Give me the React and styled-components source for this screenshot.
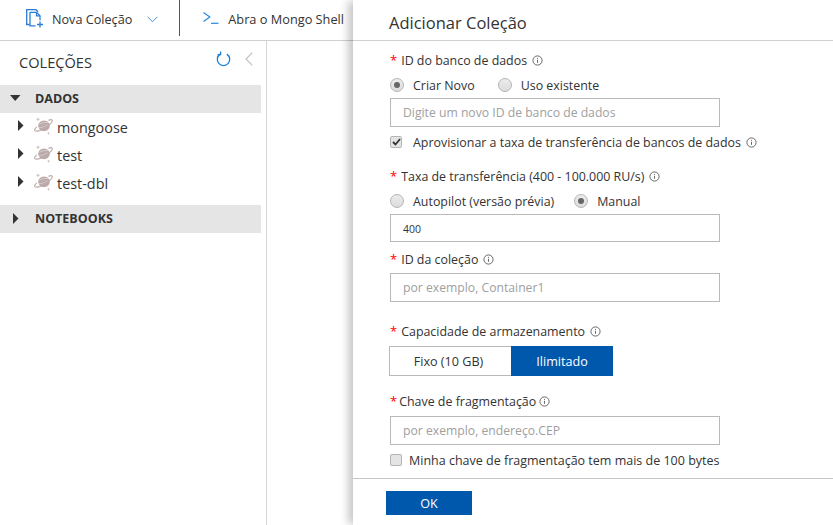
import React from "react";
import styled, { createGlobalStyle } from "styled-components";

const Global = createGlobalStyle`
  html, body { margin: 0; padding: 0; background: #fff; }
  body { font-family: "Open Sans", "Noto Sans", "Liberation Sans", sans-serif; color: #333; }
  * { box-sizing: border-box; }
`;

const Page = styled.div`
  position: relative;
  width: 833px;
  height: 525px;
  overflow: hidden;
  background: #fff;
`;
const Toolbar = styled.div`
  display: flex;
  align-items: flex-start;
  height: 41px;
  border-bottom: 1px solid #cfcfcf;
`;
const ToolButton = styled.div`
  display: flex;
  align-items: center;
  height: 36px;
  padding-left: ${p => p.$pl}px;
  padding-right: ${p => p.$pr}px;
  gap: ${p => p.$gap}px;
  font-size: ${p => p.$fs}px;
  color: #333;
  border-right: ${p => (p.$divider ? "1px solid #555" : "none")};
  svg { flex: none; }
`;
const ToolCaption = styled.span`
  margin-top: 2px;
  white-space: nowrap;
`;
const Chevron = styled.svg`
  margin-left: 7px;
  margin-top: 2px;
`;
const Body = styled.div`
  display: flex;
  height: 484px;
`;
const Sidebar = styled.div`
  width: 267px;
  height: 100%;
  border-right: 1px solid #d6d6d6;
  padding-right: 5px;
`;
const SideHead = styled.div`
  display: flex;
  align-items: center;
  height: 44px;
  padding-left: 19px;
  padding-right: 8px;
`;
const SideTitle = styled.span`
  flex: 1;
  font-size: 14.6px;
  color: #333;
  margin-top: -2px;
`;
const HeadIcons = styled.div`
  display: flex;
  align-items: center;
  gap: 14px;
  margin-top: -8px;
`;
const Section = styled.div`
  display: flex;
  align-items: center;
  height: 28px;
  background: #e5e5e5;
  font-size: 12.5px;
  font-weight: 700;
  color: #333;
  padding-left: ${p => p.$pl}px;
  padding-bottom: 2px;
  gap: ${p => p.$gap}px;
`;
const Tree = styled.div`
  display: flex;
  flex-direction: column;
  padding: 0 0 8px 18px;
`;
const TreeRow = styled.div`
  display: flex;
  align-items: center;
  height: 28px;
  font-size: 14.4px;
  color: #333;
`;
const TreeCaret = styled.svg`
  margin-right: 10px;
  margin-top: -3px;
`;
const PlanetIcon = styled.svg`
  margin-right: 4px;
  margin-top: -2px;
`;
const Panel = styled.div`
  position: absolute;
  left: 353px;
  top: 0;
  width: 480px;
  height: 525px;
  background: #fff;
  box-shadow: -6px 0 8px -1px rgba(0, 0, 0, 0.22);
  display: flex;
  flex-direction: column;
`;
const PanelHead = styled.div`
  height: 41px;
  padding: 12px 0 0 36px;
  font-size: 16.5px;
  line-height: 22px;
  color: #333;
  border-bottom: 1px solid #cfcfcf;
`;
const Form = styled.div`
  flex: 1;
  display: flex;
  flex-direction: column;
  padding: 0 0 0 37px;
`;
const Label = styled.div`
  display: flex;
  align-items: center;
  height: 18px;
  margin-top: ${p => p.$mt}px;
  font-size: 12.42px;
  color: #333;
  white-space: nowrap;
  gap: ${p => p.$gap ?? 5}px;
`;
const Star = styled.span`
  color: #f00;
  font-size: 13px;
  margin-right: -1px;
`;
const RadioRow = styled.div`
  display: flex;
  align-items: center;
  height: 18px;
  margin-top: ${p => p.$mt}px;
  font-size: 12.42px;
  color: #333;
  white-space: nowrap;
`;
const Radio = styled.span`
  position: relative;
  flex: none;
  width: 14px;
  height: 14px;
  border-radius: 50%;
  border: 1px solid #b5b5b5;
  background: linear-gradient(#ececec, #dcdcdc);
  margin-right: 9px;
  margin-left: ${p => p.$ml || 0}px;
  &::after {
    content: "";
    display: ${p => (p.$on ? "block" : "none")};
    position: absolute;
    left: 3px;
    top: 3px;
    width: 6px;
    height: 6px;
    border-radius: 50%;
    background: #666;
  }
`;
const Input = styled.div`
  display: flex;
  align-items: center;
  width: 330px;
  height: ${p => p.$h}px;
  margin-top: ${p => p.$mt}px;
  border: 1px solid #b9b9b9;
  padding-left: 12px;
  padding-top: ${p => (p.$value ? 2 : 0)}px;
  font-size: ${p => (p.$value ? 10.5 : 12.2)}px;
  color: ${p => (p.$value ? "#333" : "#a0a0a0")};
  white-space: nowrap;
`;
const CheckRow = styled.div`
  display: flex;
  align-items: center;
  height: 18px;
  margin-top: ${p => p.$mt}px;
  gap: ${p => p.$gap}px;
  font-size: ${p => p.$fs}px;
  color: #333;
  white-space: nowrap;
`;
const Check = styled.span`
  display: flex;
  align-items: center;
  justify-content: center;
  flex: none;
  width: 12px;
  height: 12px;
  border-radius: 2px;
  border: 1px solid #b5b5b5;
  background: #e4e4e4;
`;
const Toggle = styled.div`
  display: flex;
  height: 30px;
  margin-top: ${p => p.$mt}px;
  margin-left: -1px;
`;
const ToggleItem = styled.div`
  display: flex;
  align-items: center;
  justify-content: center;
  width: ${p => p.$w}px;
  padding-right: ${p => (p.$on ? 0 : 4)}px;
  font-size: 12.6px;
  color: ${p => (p.$on ? "#fff" : "#333")};
  background: ${p => (p.$on ? "#0058ad" : "#fff")};
  border: 1px solid ${p => (p.$on ? "#0058ad" : "#b9b9b9")};
  border-right: ${p => (p.$on ? "1px solid #0058ad" : "none")};
`;
const Footer = styled.div`
  height: 47px;
  border-top: 1px solid #c4c4c4;
  padding: 12px 0 0 33px;
`;
const OkButton = styled.div`
  display: flex;
  align-items: center;
  justify-content: center;
  width: 86px;
  height: 24px;
  background: #0058ad;
  color: #fff;
  font-size: 12.6px;
`;
const InfoTight = styled.span`
  display: flex;
  margin-left: -6px;
`;
const SectionText = styled.span`
  margin-left: ${p => p.$ml || 0}px;
`;

const Info = () => (
  <svg width="11" height="11" viewBox="0 0 11 11" fill="none" stroke="#444" strokeWidth="0.8">
    <circle cx="5.5" cy="5.5" r="4.600" />
    <path d="M5.500 4.800v3M5.500 2.900v1" />
  </svg>
);

const CaretRight = () => (
  <TreeCaret width="6" height="11" viewBox="0 0 6 11"><path d="M0 0l5.500 5.500L0 11z" fill="#333" /></TreeCaret>
);

const SectionCaret = () => (
  <svg width="6" height="11" viewBox="0 0 6 11"><path d="M0 0l5.500 5.500L0 11z" fill="#333" /></svg>
);

const Planet = () => (
  <PlanetIcon width="19" height="18" viewBox="0 0 19 18" fill="none">
    <path d="M4 .6v3.400M2.400 2.300h3.200" stroke="#c8b6b6" strokeWidth="0.8" />
    <path d="M14.500 15v2.400M13.300 16.200h2.400" stroke="#c8b6b6" strokeWidth="0.7" />
    <ellipse cx="10" cy="8.800" rx="5.800" ry="5.400" fill="#bcaaaa" />
    <path d="M.8 13.600c1.600 1.500 7-.6 11.500-3.600 3.900-2.600 6.500-5.600 5.800-6.800-.4-.7-2-.5-3.600.2" stroke="#bcaaaa" strokeWidth="1.200" />
    <path d="M.8 13.600c-.5-.7.2-2 1.900-3.700" stroke="#bcaaaa" strokeWidth="1.200" />
    <path d="M5.400 7.300c2.300-1.400 5-2 8.300-1.700" stroke="#dcd2d2" strokeWidth="0.900" />
    <path d="M5 10.600c2.300.2 5.200-.8 8.800-3" stroke="#dcd2d2" strokeWidth="0.700" />
  </PlanetIcon>
);

const NewCollectionIcon = () => (
  <svg width="18" height="19" viewBox="0 0 18 19" fill="none" stroke="#2b7cd3" strokeWidth="1.300">
    <path d="M3.500 15.500H.7V.7h9.300l2 2" />
    <path d="M4 3.300h6.500l3.500 3.500v4.500M4 3.300v13.500h5.500" />
    <path d="M10.500 3.300v3.500H14" />
    <path d="M14 12.500v6M11 15.500h6" />
  </svg>
);

const Terminal = () => (
  <svg width="16" height="13" viewBox="0 0 16 13" fill="none" stroke="#2b8ae0" strokeWidth="1.200">
    <path d="M.5.600l6.300 4.500L.5 9.600" />
    <path d="M8 11.300h7.500" />
  </svg>
);

const Refresh = () => (
  <svg width="15" height="16" viewBox="0 0 15 16" fill="none" stroke="#1a7fd4" strokeWidth="1.300">
    <path d="M10.800 3.100a6.200 6.200 0 1 1-6.600 0" />
    <path d="M4.300.6v3h-3" transform="translate(0.300 0)" />
  </svg>
);

const Back = () => (
  <svg width="8" height="14" viewBox="0 0 8 14" fill="none" stroke="#c4bcbc" strokeWidth="1.100">
    <path d="M7.300.6L1 7l6.300 6.400" />
  </svg>
);

export default function App() {
  return (
    <Page>
      <Global />
      <Toolbar>
        <ToolButton $pl={26} $pr={21} $gap={8} $fs={12.65} $divider>
          <NewCollectionIcon />
          <ToolCaption>Nova Coleção</ToolCaption>
          <Chevron width="11" height="7" viewBox="0 0 11 7" fill="none" stroke="#4a90d9" strokeWidth="1">
            <path d="M.6.800l4.900 4.900L10.400.8" />
          </Chevron>
        </ToolButton>
        <ToolButton $pl={23} $pr={0} $gap={9} $fs={12.75}>
          <Terminal />
          <ToolCaption>Abra o Mongo Shell</ToolCaption>
        </ToolButton>
      </Toolbar>
      <Body>
        <Sidebar>
          <SideHead>
            <SideTitle>COLEÇÕES</SideTitle>
            <HeadIcons>
              <Refresh />
              <Back />
            </HeadIcons>
          </SideHead>
          <Section $pl={10} $gap={5}>
            <svg width="11" height="6" viewBox="0 0 11 6"><path d="M0 0h10.500L5.200 6z" fill="#333" /></svg>
            <SectionText $ml={9}>DADOS</SectionText>
          </Section>
          <Tree>
            {["mongoose", "test", "test-dbl"].map(n => (
              <TreeRow key={n}>
                <CaretRight />
                <Planet />
                <span>{n}</span>
              </TreeRow>
            ))}
          </Tree>
          <Section $pl={13} $gap={16}>
            <SectionCaret />
            <SectionText>NOTEBOOKS</SectionText>
          </Section>
        </Sidebar>
      </Body>
      <Panel>
        <PanelHead>Adicionar Coleção</PanelHead>
        <Form>
          <Label $mt={10}><Star>*</Star><span>ID do banco de dados</span><Info /></Label>
          <RadioRow $mt={7}>
            <Radio $on />Criar Novo
            <Radio $ml={23} />Uso existente
          </RadioRow>
          <Input $h={29} $mt={4}>Digite um novo ID de banco de dados</Input>
          <CheckRow $mt={6} $gap={11} $fs={12.42}>
            <Check>
              <svg width="9" height="8" viewBox="0 0 9 8" fill="none" stroke="#333" strokeWidth="1.800"><path d="M1 4l2.500 2.500L8 1" /></svg>
            </Check>
            <span>Aprovisionar a taxa de transferência de bancos de dados</span>
            <InfoTight><Info /></InfoTight>
          </CheckRow>
          <Label $mt={16}><Star>*</Star><span>Taxa de transferência (400 - 100.000 RU/s)</span><Info /></Label>
          <RadioRow $mt={7}>
            <Radio />Autopilot (versão prévia)
            <Radio $ml={20} $on />Manual
          </RadioRow>
          <Input $h={28} $mt={4} $value>400</Input>
          <Label $mt={8}><Star>*</Star><span>ID da coleção</span><Info /></Label>
          <Input $h={29} $mt={5}>por exemplo, Container1</Input>
          <Label $mt={20}><Star>*</Star><span>Capacidade de armazenamento</span><Info /></Label>
          <Toggle $mt={6}>
            <ToggleItem $w={122}>Fixo (10 GB)</ToggleItem>
            <ToggleItem $w={102} $on>Ilimitado</ToggleItem>
          </Toggle>
          <Label $mt={16} $gap={3}><Star>*</Star><span>Chave de fragmentação</span><Info /></Label>
          <Input $h={29} $mt={6}>por exemplo, endereço.CEP</Input>
          <CheckRow $mt={6} $gap={7} $fs={12.5}>
            <Check />
            <span>Minha chave de fragmentação tem mais de 100 bytes</span>
          </CheckRow>
        </Form>
        <Footer>
          <OkButton>OK</OkButton>
        </Footer>
      </Panel>
    </Page>
  );
}
